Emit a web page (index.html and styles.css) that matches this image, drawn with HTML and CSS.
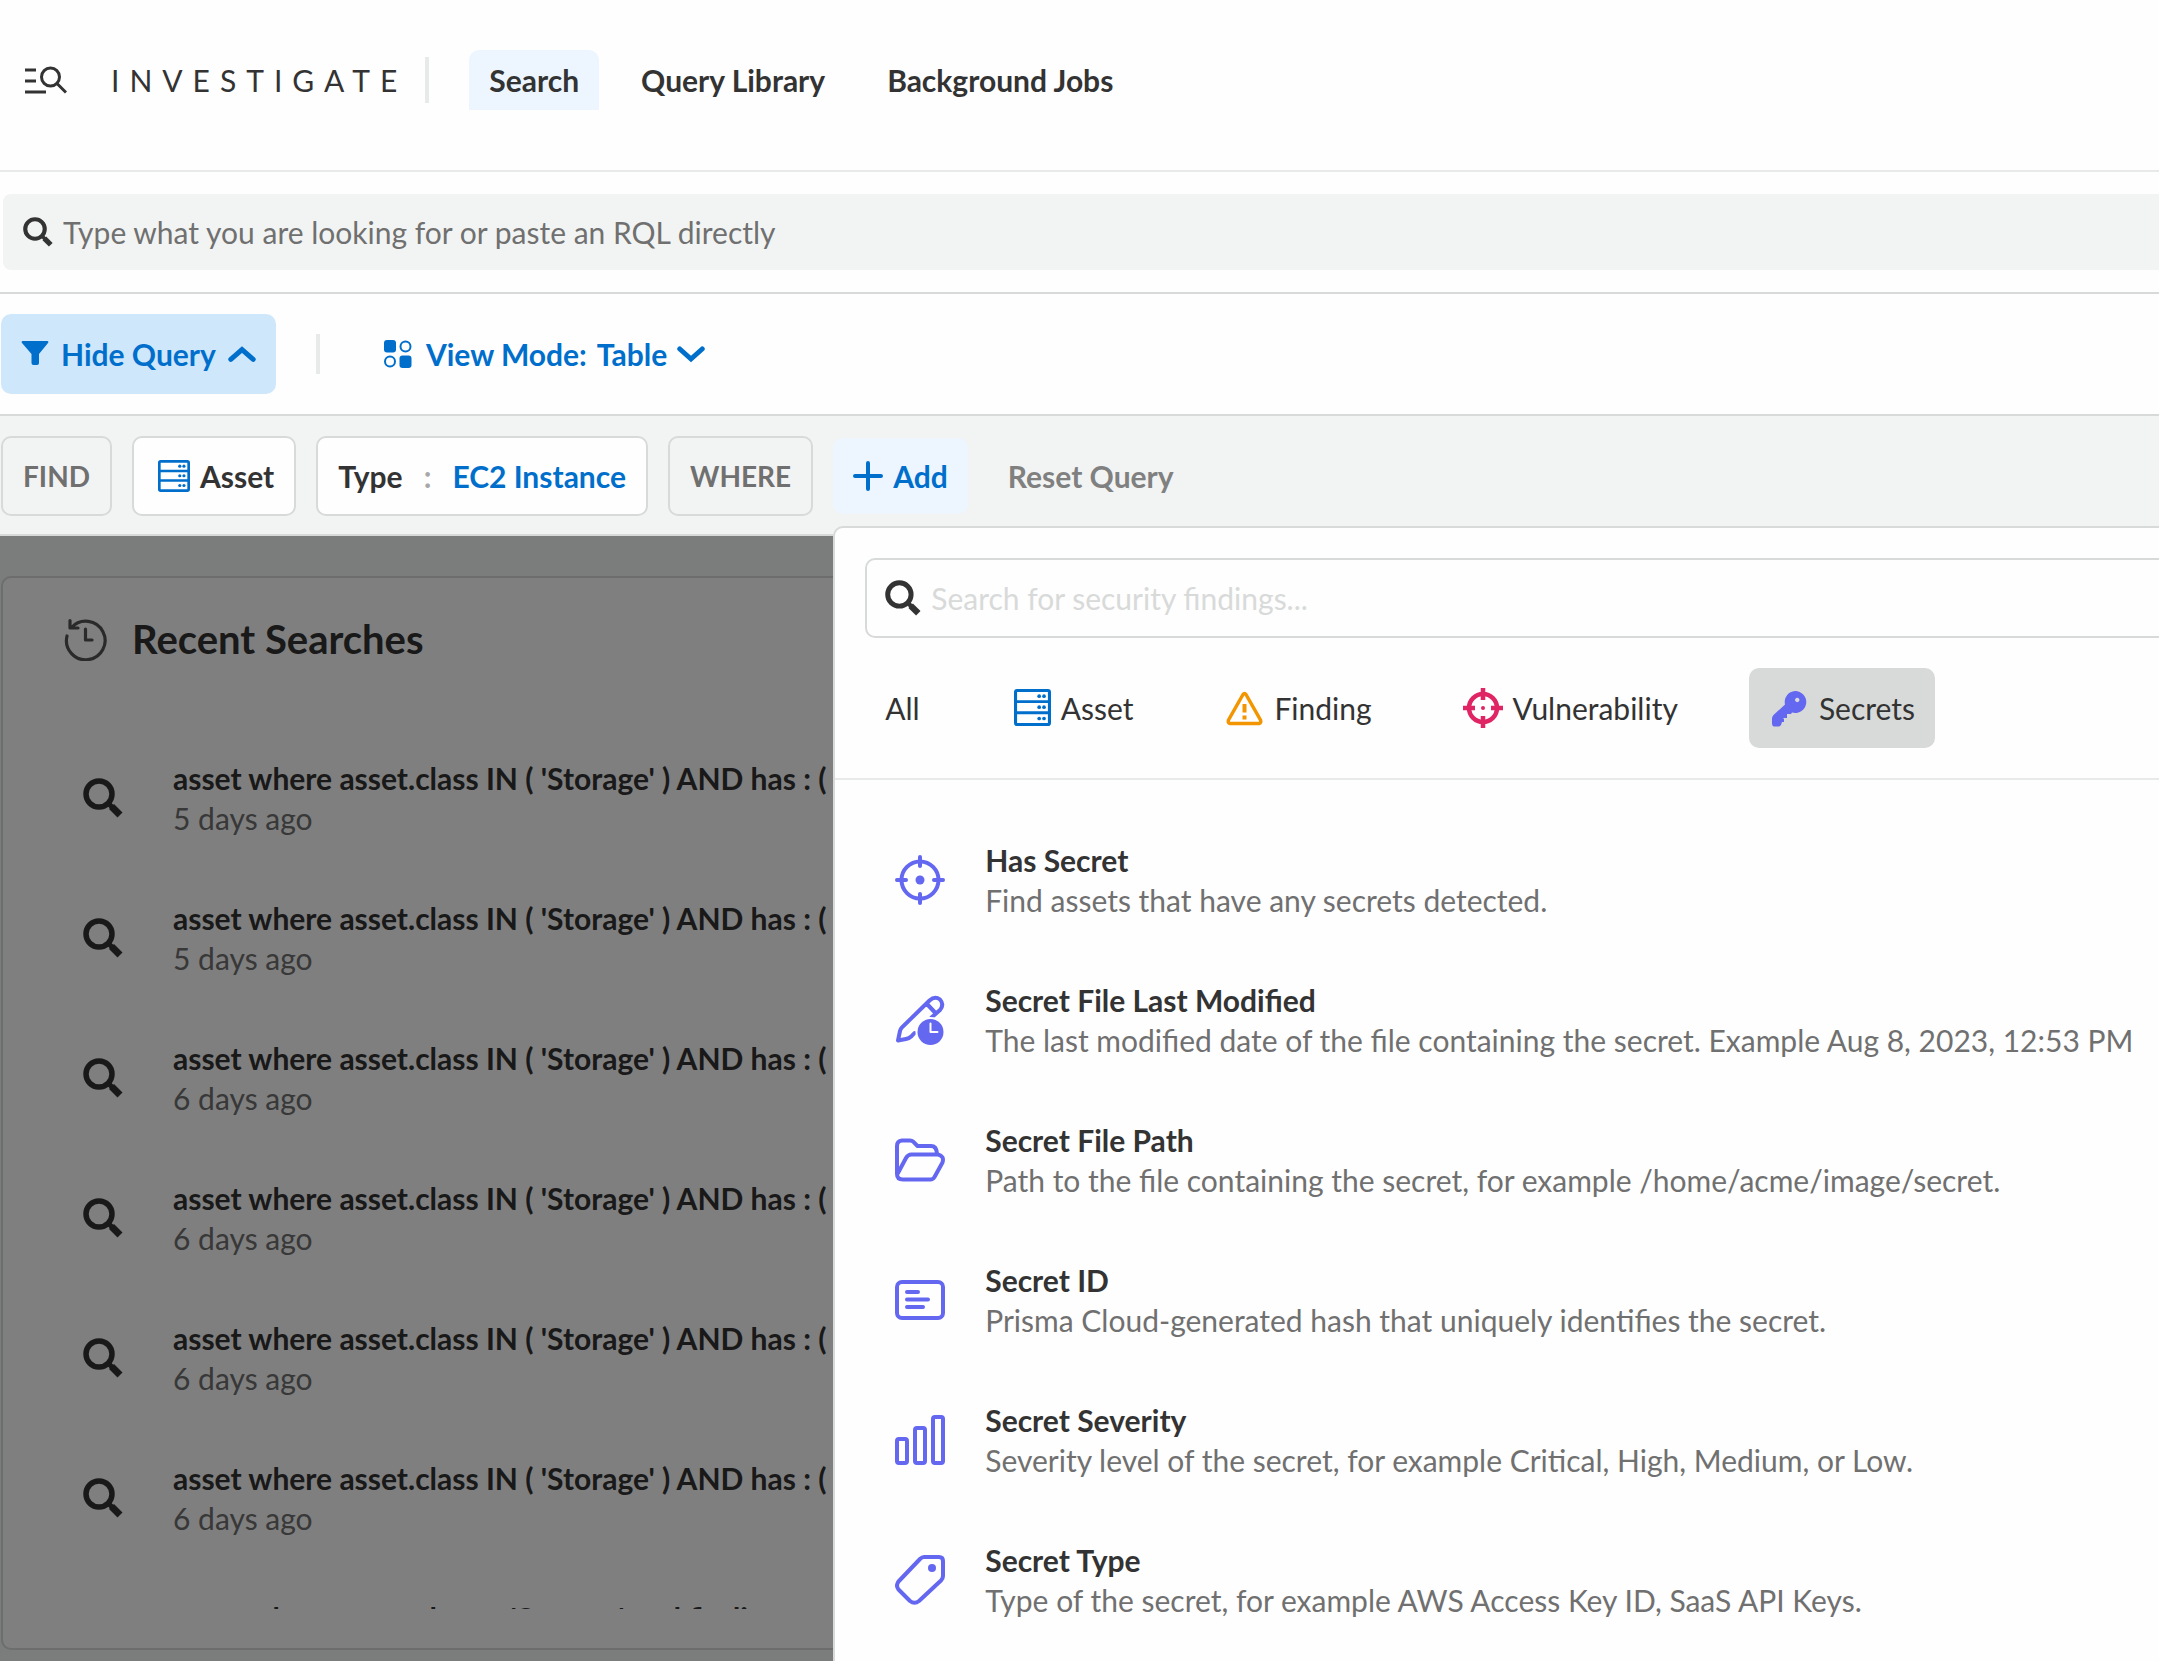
FILE: index.html
```html
<!DOCTYPE html>
<html lang="en">
<head>
<meta charset="utf-8">
<title>Investigate</title>
<link rel="stylesheet" href="styles.css">
</head>
<body>
<svg class="defs" aria-hidden="true">
  <symbol id="magnifier" viewBox="0 0 40 40">
    <circle cx="16" cy="16" r="13" fill="none" stroke="currentColor" stroke-width="5.500"/>
    <path d="M25 25l5 5" stroke="currentColor" stroke-width="5"/>
    <path d="M28.500 28.500L37 37" stroke="currentColor" stroke-width="7"/>
  </symbol>
  <symbol id="server" viewBox="0 0 36 36">
    <path d="M3 0h30a3 3 0 0 1 3 3v30a3 3 0 0 1-3 3H3a3 3 0 0 1-3-3V3a3 3 0 0 1 3-3zM3 3v8h30V3zM3 13.700v8h30v-8zM3 24.500v8.500h30v-8.500z" fill="currentColor" fill-rule="evenodd"/>
    <g fill="currentColor"><circle cx="24.500" cy="7" r="1.800"/><circle cx="29.200" cy="7" r="1.800"/><circle cx="24.500" cy="17.700" r="1.800"/><circle cx="29.200" cy="17.700" r="1.800"/><circle cx="24.500" cy="28.700" r="1.800"/><circle cx="29.200" cy="28.700" r="1.800"/></g>
  </symbol>
</svg>

<div class="page">
  <header class="header">
    <svg class="brand-icon" viewBox="0 0 42 28" fill="none" stroke="currentColor" stroke-width="3"><path d="M0 4h11M0 15h11M0 26h21M32 17.500l9 9"/><circle cx="25.500" cy="11" r="9"/></svg>
    <h1 class="brand">INVESTIGATE</h1>
    <nav class="nav">
      <a class="nav-link nav-link-active" href="#">Search</a>
      <a class="nav-link" href="#">Query Library</a>
      <a class="nav-link" href="#">Background Jobs</a>
    </nav>
  </header>

  <div class="search-row">
    <label class="rql">
      <svg class="rql-icon"><use href="#magnifier"/></svg>
      <input class="field" type="text" aria-label="Search" placeholder="Type what you are looking for or paste an RQL directly">
    </label>
  </div>

  <div class="toolbar">
    <button class="tool tool-on">
      <svg class="icon-28" viewBox="0 0 28 28" fill="currentColor"><path d="M1.500 1h25q1.500.500.700 1.800L18 14v9q0 2-2 2h-3.500q-2 0-2-2v-9L.800 2.800Q0 1.500 1.500 1z"/></svg>
      <span>Hide Query</span>
      <svg class="icon-28" viewBox="0 0 28 28" fill="none" stroke="currentColor" stroke-width="5" stroke-linecap="round"><path d="M2.800 19.300L14 9.500l11.200 9.800"/></svg>
    </button>
    <span class="rule"></span>
    <button class="tool">
      <svg class="icon-view" viewBox="0 0 28 28" fill="currentColor"><rect x="0" y="0" width="12" height="12.500" rx="3"/><rect x="15.500" y="15.500" width="12" height="12.500" rx="3"/><g fill="none" stroke="currentColor" stroke-width="2"><circle cx="21.500" cy="6.500" r="5"/><circle cx="6" cy="21.500" r="5"/></g></svg>
      <span>View Mode:</span>
      <span>Table</span>
      <svg class="icon-28" viewBox="0 0 28 28" fill="none" stroke="currentColor" stroke-width="5" stroke-linecap="round"><path d="M2.800 9L14 19l11.200-10"/></svg>
    </button>
  </div>

  <div class="query">
    <span class="chip chip-key">FIND</span>
    <button class="chip"><svg class="chip-icon"><use href="#server"/></svg><span>Asset</span></button>
    <button class="chip chip-type"><span>Type</span><span class="colon">:</span><span class="blue">EC2 Instance</span></button>
    <span class="chip chip-key">WHERE</span>
    <div class="adder">
      <button class="add"><svg class="plus" viewBox="0 0 30 30" stroke="currentColor" stroke-width="4" stroke-linecap="round"><path d="M15 2v26M2 15h26"/></svg><span>Add</span></button>

      <section class="panel">
        <div class="panel-top">
          <label class="find">
            <svg class="find-icon"><use href="#magnifier"/></svg>
            <input class="field field-light" type="text" aria-label="Search findings" placeholder="Search for security findings...">
          </label>
          <div class="tabs">
            <button class="tab">All</button>
            <button class="tab"><svg class="tab-icon blue" viewBox="0 0 40 40"><use href="#server" x="3" y="1" width="37" height="37"/></svg>Asset</button>
            <button class="tab"><svg class="tab-icon amber" viewBox="0 0 40 40" fill="none" stroke="currentColor" stroke-width="3.500" stroke-linejoin="round"><path d="M19 6.500q1.500-2 3 0L36.500 32q1 3-1.500 3.500H6Q3.500 35 4.500 32z"/><path d="M20.500 16v8.500M20.500 27.500v4" stroke-width="4"/></svg>Finding</button>
            <button class="tab"><svg class="tab-icon pink" viewBox="0 0 40 40" fill="none" stroke="currentColor" stroke-width="4.500"><circle cx="20" cy="20" r="14"/><path d="M20 0v12M20 28v12M0 20h12M28 20h12"/><circle cx="20" cy="20" r="2" fill="currentColor" stroke="none"/></svg>Vulnerability</button>
            <button class="tab tab-on"><svg class="tab-icon violet" viewBox="0 0 40 40" fill="currentColor"><path fill-rule="evenodd" d="M26 3a11 11 0 1 1-3 21.500l-1 1.500h-4v4h-4l1 1v3h-2l-1 3q-1 1.500-3 1.500H5q-2-.500-2-3v-5q0-2 1.500-3.500L16 16.500A11 11 0 0 1 26 3zM28.200 9.800a2.200 2.200 0 1 0 .1 0z"/></svg>Secrets</button>
          </div>
        </div>
        <ul class="options">
          <li class="option">
            <svg class="option-icon" viewBox="0 0 50 50"><circle cx="25" cy="25" r="18.500"/><path d="M25 2v9M25 39v9M2 25h9M39 25h9"/><circle cx="25" cy="25" r="4.500" fill="currentColor" stroke="none"/></svg>
            <div><h3 class="title">Has Secret</h3><p class="note">Find assets that have any secrets detected.</p></div>
          </li>
          <li class="option">
            <svg class="option-icon" viewBox="0 0 50 50"><path d="M19.500 38l-3 3.200Q14 43.500 11 44l-8 1.500 2-9.500q.400-2 2-3.600L34.500 5.500Q40 .500 45 4.500q4.500 5 0 10.500l-8.500 7.500M31.500 8.500l9 9.500"/><circle cx="35.500" cy="37" r="15" fill="#fefefe" stroke="none"/><circle cx="35.500" cy="37" r="13" fill="currentColor" stroke="none"/><path class="hands" d="M35.500 28.500V37h7"/></svg>
            <div><h3 class="title">Secret File Last Modified</h3><p class="note">The last modified date of the file containing the secret. Example Aug 8, 2023, 12:53 PM</p></div>
          </li>
          <li class="option">
            <svg class="option-icon" viewBox="0 0 50 50"><path d="M2 39V11q0-5 5-5.500h8q2 0 3.200 1.200L22.500 11H36q5.500 0 6 7.500M3 38L11 23q2-3.500 5.500-3.500H43q6.500 1.500 4.500 8L39.500 42q-1.500 2.500-4 2.500H8Q2 44.500 2 39"/></svg>
            <div><h3 class="title">Secret File Path</h3><p class="note">Path to the file containing the secret, for example /home/acme/image/secret.</p></div>
          </li>
          <li class="option">
            <svg class="option-icon" viewBox="0 0 50 50"><rect x="2" y="7" width="46" height="36" rx="5"/><path d="M12 17h11M12 24.500h21M12 32h16"/></svg>
            <div><h3 class="title">Secret ID</h3><p class="note">Prisma Cloud-generated hash that uniquely identifies the secret.</p></div>
          </li>
          <li class="option">
            <svg class="option-icon" viewBox="0 0 50 50"><rect x="2" y="24" width="10" height="24" rx="2"/><rect x="20" y="13" width="10" height="35" rx="2"/><rect x="38" y="2" width="10" height="46" rx="2"/></svg>
            <div><h3 class="title">Secret Severity</h3><p class="note">Severity level of the secret, for example Critical, High, Medium, or Low.</p></div>
          </li>
          <li class="option">
            <svg class="option-icon" viewBox="0 0 50 50"><path d="M29 2h15q4 0 4 4v15q0 2.500-2 4.500L24 46q-4.500 3.500-9 0L3.500 34.500q-3-4 0-8L25 4q2-2 4-2z"/><circle cx="37" cy="13" r="4" fill="currentColor" stroke="none"/></svg>
            <div><h3 class="title">Secret Type</h3><p class="note">Type of the secret, for example AWS Access Key ID, SaaS API Keys.</p></div>
          </li>
        </ul>
      </section>
    </div>
    <button class="reset">Reset Query</button>
  </div>

  <main class="main">
    <section class="card">
      <div class="card-head">
        <svg class="history" viewBox="0 0 44 44" fill="none" stroke="currentColor" stroke-width="3.200" stroke-linecap="round" stroke-linejoin="round"><path d="M3 19A19.300 19.300 0 1 0 7.500 10.500M6 3.500v7.500h8M21.500 12v11h6.500"/></svg>
        <h2 class="card-title">Recent Searches</h2>
      </div>
      <ul class="recent">
        <li class="recent-row"><svg class="recent-icon"><use href="#magnifier"/></svg><div class="lines"><h3 class="title">asset where asset.class IN ( 'Storage' ) AND has : ( secret</h3><p class="note">5 days ago</p></div></li>
        <li class="recent-row"><svg class="recent-icon"><use href="#magnifier"/></svg><div class="lines"><h3 class="title">asset where asset.class IN ( 'Storage' ) AND has : ( secret</h3><p class="note">5 days ago</p></div></li>
        <li class="recent-row"><svg class="recent-icon"><use href="#magnifier"/></svg><div class="lines"><h3 class="title">asset where asset.class IN ( 'Storage' ) AND has : ( secret</h3><p class="note">6 days ago</p></div></li>
        <li class="recent-row"><svg class="recent-icon"><use href="#magnifier"/></svg><div class="lines"><h3 class="title">asset where asset.class IN ( 'Storage' ) AND has : ( secret</h3><p class="note">6 days ago</p></div></li>
        <li class="recent-row"><svg class="recent-icon"><use href="#magnifier"/></svg><div class="lines"><h3 class="title">asset where asset.class IN ( 'Storage' ) AND has : ( secret</h3><p class="note">6 days ago</p></div></li>
        <li class="recent-row"><svg class="recent-icon"><use href="#magnifier"/></svg><div class="lines"><h3 class="title">asset where asset.class IN ( 'Storage' ) AND has : ( secret</h3><p class="note">6 days ago</p></div></li>
        <li class="recent-row"><svg class="recent-icon"><use href="#magnifier"/></svg><div class="lines"><h3 class="title">asset where asset.class = 'Storage' and finding.type</h3></div></li>
      </ul>
    </section>
    <div class="scrim"></div>
  </main>
</div>
</body>
</html>
```

FILE: styles.css
```css
* { box-sizing: border-box; }
body { margin: 0; }
h1, h2, h3, p, ul { margin: 0; padding: 0; font: inherit; }
ul { list-style: none; }
svg { display: block; flex: none; }
.defs { position: absolute; width: 0; height: 0; }
button { font: inherit; color: inherit; border: 0; background: none; padding: 0; cursor: pointer; }
a { color: inherit; text-decoration: none; }

.page {
  display: flex;
  flex-direction: column;
  min-height: 100vh;
  overflow: hidden;
  position: relative;
  font: 400 30px/40px Lato, "Open Sans", sans-serif;
  color: #333;
  background: #fefefe;
}

.header {
  display: flex;
  align-items: center;
  height: 172px;
  padding: 0 25px 10px;
  border-bottom: 2px solid #e8eae9;
}
.brand-icon { width: 42px; height: 28px; margin-right: 44px; }
.brand {
  letter-spacing: 10px;
  padding-right: 18px;
  border-right: 4px solid #e8eae9;
  line-height: 46px;
}
.nav { display: flex; gap: 22px; margin-left: 40px; }
.nav-link { padding: 10px 20px; font-weight: 700; }
.nav-link-active { background: #edf6ff; border-radius: 10px 10px 0 0; }

.search-row { padding: 22px 0 22px 3px; border-bottom: 2px solid #d8dad9; }
.rql {
  display: flex;
  align-items: center;
  gap: 10px;
  height: 76px;
  padding-left: 20px;
  border-radius: 8px 0 0 8px;
  background: #f2f4f3;
}
.rql-icon { width: 30px; height: 30px; }
.field {
  flex: 1;
  min-width: 0;
  height: 60px;
  padding: 0;
  border: 0;
  outline: 0;
  background: none;
  font: inherit;
  color: #333;
}
.field::placeholder { color: #707070; opacity: 1; }
.field-light::placeholder { color: #d8dad9; }

.toolbar {
  display: flex;
  align-items: center;
  padding: 20px 1px;
  border-bottom: 2px solid #d8dad9;
}
.tool {
  display: flex;
  align-items: center;
  gap: 10px;
  height: 80px;
  padding: 0 20px;
  border-radius: 10px;
  font-weight: 700;
  color: #006fcc;
}
.tool-on { gap: 12px; background: #cfe7fb; }
.icon-28 { width: 28px; height: 28px; }
.icon-view { width: 28px; height: 28px; margin: 0 4px; }
.rule { width: 4px; height: 40px; margin: 0 40px; background: #e8eae9; }

.query {
  display: flex;
  align-items: center;
  gap: 20px;
  padding: 20px 1px 18px;
  border-bottom: 2px solid #d8dad9;
  background: #f2f4f3;
}
.chip {
  display: flex;
  align-items: center;
  gap: 10px;
  height: 80px;
  padding: 0 20px;
  border: 2px solid #d8dad9;
  border-radius: 10px;
  background: #fefefe;
  font-weight: 700;
  white-space: nowrap;
}
.chip-key { background: none; color: #707070; font-size: 28px; }
.chip-type { gap: 21px; }
.chip-icon { width: 32px; height: 32px; margin-left: 4px; color: #006fcc; }
.colon { color: #a8a8a8; }
.blue { color: #006fcc; }
.amber { color: #f29500; }
.pink { color: #e02565; }
.violet { color: #6467f0; }

.adder { position: relative; }
.add {
  display: flex;
  align-items: center;
  gap: 10px;
  height: 76px;
  padding: 0 20px;
  border-radius: 10px;
  background: #edf6ff;
  color: #006fcc;
  font-weight: 700;
}
.plus { width: 30px; height: 30px; }
.reset { padding: 0 20px; font-weight: 700; color: #808080; }

.panel {
  position: absolute;
  z-index: 2;
  top: 88px;
  left: 0;
  width: 1600px;
  padding-bottom: 30px;
  border: 2px solid #d8dad9;
  border-radius: 10px;
  background: #fefefe;
}
.panel-top { padding: 30px; border-bottom: 2px solid #e8eae9; }
.find {
  display: flex;
  align-items: center;
  gap: 10px;
  height: 80px;
  padding: 0 18px;
  border: 2px solid #d8dad9;
  border-radius: 10px;
}
.find-icon { width: 36px; height: 36px; }
.tabs { display: flex; gap: 51px; margin-top: 30px; }
.tab {
  display: flex;
  align-items: center;
  gap: 10px;
  height: 80px;
  padding: 0 20px;
  border-radius: 10px;
}
.tab-on { background: #d8dad9; }
.tab-icon { width: 40px; height: 40px; }

.options { padding-top: 30px; }
.option { display: flex; align-items: center; gap: 40px; height: 140px; padding-left: 60px; }
.option-icon {
  width: 50px;
  height: 50px;
  color: #6467f0;
  fill: none;
  stroke: currentColor;
  stroke-width: 4px;
  stroke-linecap: round;
  stroke-linejoin: round;
}
.hands { stroke: #fefefe; stroke-width: 2px; }
.title { font-weight: 700; white-space: nowrap; }
.note { color: #707070; white-space: nowrap; }

.main { position: relative; flex: 1; padding: 40px 1px 11px; background: #f7faf9; }
.card {
  padding-bottom: 39px;
  border: 2px solid #d8dad9;
  border-radius: 10px;
  background: #fefefe;
}
.card-head { display: flex; align-items: center; gap: 24px; height: 150px; padding: 0 61px 28px; }
.history { width: 44px; height: 44px; color: #555; }
.card-title { font-size: 40px; font-weight: 700; }
.recent { max-height: 881px; overflow: hidden; }
.recent-row { display: flex; align-items: center; gap: 50px; height: 140px; padding-left: 80px; }
.recent-icon { width: 40px; height: 40px; }
.lines { min-height: 80px; }
.scrim { position: absolute; inset: 0; background: rgba(0, 0, 0, 0.5); }
```
